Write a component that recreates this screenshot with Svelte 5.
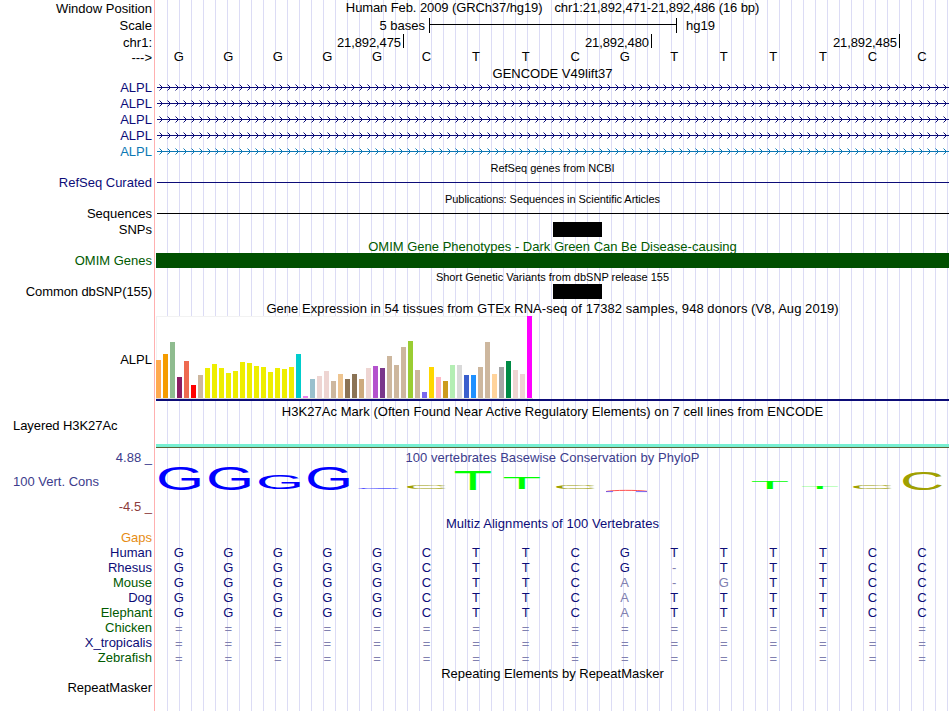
<script lang="ts">
	type Cell = { base: string; faded: boolean };

	const sequence = "GGGGGCTTCGTTTTCC".split("");

	const transcripts = ["navy", "navy", "navy", "navy", "teal"];

	const expression: [string, number][] = [
		["#ffaa4f", 38], ["#f59c00", 44], ["#8fbc8f", 56], ["#8b1c62", 21], ["#ee6a50", 37],
		["#ff0000", 13], ["#cdb79e", 23], ["#eeee00", 30], ["#eeee00", 34], ["#eeee00", 30],
		["#eeee00", 25], ["#eeee00", 27], ["#eeee00", 36], ["#eeee00", 35], ["#eeee00", 32],
		["#eeee00", 31], ["#eeee00", 26], ["#eeee00", 30], ["#eeee00", 29], ["#eeee00", 31],
		["#00cdcd", 44], ["#ee82ee", 2], ["#9ac0cd", 19], ["#eed5d2", 22], ["#eed5d2", 27],
		["#cdb79e", 17], ["#eec591", 24], ["#8b7355", 19], ["#8b7355", 24], ["#cdaa7d", 19],
		["#eed5d2", 30], ["#b452cd", 32], ["#7a378b", 30], ["#cdb79e", 42], ["#cdb79e", 33],
		["#cdb79e", 51], ["#9acd32", 57], ["#cdb79e", 28], ["#7a67ee", 6], ["#ffd700", 31],
		["#ffb6c1", 21], ["#cd9b1d", 17], ["#b4eeb4", 33], ["#d9d9d9", 33], ["#3a5fcd", 23],
		["#1e90ff", 23], ["#cdb79e", 31], ["#cdb79e", 56], ["#ffd39b", 24], ["#a6a6a6", 31],
		["#008b45", 37], ["#eed5d2", 28], ["#eed5d2", 24], ["#ff00ff", 82],
	];

	// base, left, top, width, height within the conservation track
	const logo: [string, number, number, number, number][] = [
		["G", 3, 19, 41, 23],
		["G", 53, 19, 41, 23],
		["G", 103, 27, 41, 14],
		["G", 152, 19, 41, 23],
		["G", 202, 39.4, 41, 1.4],
		["C", 251, 37, 39, 4],
		["T", 299, 23, 36, 19],
		["T", 348, 30, 36, 11],
		["C", 400, 37, 39, 4],
		["T", 596, 34, 36, 7],
		["T", 646, 39, 36, 2],
		["C", 697, 37, 39, 4],
		["C", 747, 24, 39, 18],
	];

	// ink box of each capital at font-size 100: left, width, height, overshoot
	const glyphs: Record<string, [number, number, number, number, string]> = {
		G: [5, 66.2, 71, 1, "#0000ff"],
		C: [5, 63.7, 71, 1, "#a0a000"],
		T: [2.2, 56.7, 68.8, 0, "#00ff00"],
	};

	const species = [
		{ name: "Human", color: "navy", bases: "GGGGGCTTCGTTTTCC" },
		{ name: "Rhesus", color: "navy", bases: "GGGGGCTTCG-TTTCC" },
		{ name: "Mouse", color: "green", bases: "GGGGGCTTCA-GTTCC" },
		{ name: "Dog", color: "navy", bases: "GGGGGCTTCATTTTCC" },
		{ name: "Elephant", color: "green", bases: "GGGGGCTTCATTTTCC" },
		{ name: "Chicken", color: "green", bases: "================" },
		{ name: "X_tropicalis", color: "navy", bases: "================" },
		{ name: "Zebrafish", color: "green", bases: "================" },
	];

	function cells(bases: string): Cell[] {
		return bases.split("").map((base, i) => ({ base, faded: base !== sequence[i] }));
	}

	function place([base, x, y, w, h]: [string, number, number, number, number]) {
		const [left, width, height, over] = glyphs[base];
		const sx = w / width;
		const sy = h / height;
		return `translate(${x - left * sx} ${y + h - over * sy}) scale(${sx} ${sy})`;
	}
</script>

{#snippet title(text: string, kind: string)}
	<div class="row title {kind}">
		<span class="track">{text}</span>
	</div>
{/snippet}

<main class="browser">
	<div class="row position">
		<span class="label">Window Position</span>
		<div class="track">
			<span>Human Feb. 2009 (GRCh37/hg19)</span>
			<span>chr1:21,892,471-21,892,486 (16 bp)</span>
		</div>
	</div>
	<div class="row scale">
		<span class="label">Scale</span>
		<div class="track">
			<span class="size">5 bases</span>
			<i class="ruler"></i>
			<span>hg19</span>
		</div>
	</div>
	<div class="row chrom">
		<span class="label">chr1:</span>
		<div class="track ticks">
			<span>21,892,475</span>
			<span>21,892,480</span>
			<span>21,892,485</span>
		</div>
	</div>
	<div class="row strand">
		<span class="label">---&gt;</span>
		<div class="track bases">
			{#each sequence as base}<span>{base}</span>{/each}
		</div>
	</div>

	{@render title("GENCODE V49lift37", "gencode")}
	{#each transcripts as color}
		<div class="row gene {color}">
			<span class="label">ALPL</span>
			<svg class="track" width="793" height="16" shape-rendering="crispEdges">
				<rect x="1" y="7" width="792" height="1" fill="currentColor" />
				{#each { length: 99 } as _, i}
					<g fill="currentColor" transform="translate({i * 8 + 3} 4)">
						<rect x="2" y="2" width="1" height="3" />
						<rect x="1" y="1" width="1" height="1" />
						<rect x="1" y="5" width="1" height="1" />
						<rect width="1" height="1" opacity="0.5" />
						<rect y="6" width="1" height="1" opacity="0.5" />
					</g>
				{/each}
			</svg>
		</div>
	{/each}

	{@render title("RefSeq genes from NCBI", "small refseq")}
	<div class="row item navy">
		<span class="label">RefSeq Curated</span>
		<div class="track"><i class="line"></i></div>
	</div>

	{@render title("Publications: Sequences in Scientific Articles", "small pubs")}
	<div class="row item sequences">
		<span class="label">Sequences</span>
		<div class="track"><i class="line"></i></div>
	</div>
	<div class="row item">
		<span class="label">SNPs</span>
		<div class="track"><i class="block"></i></div>
	</div>

	{@render title("OMIM Gene Phenotypes - Dark Green Can Be Disease-causing", "omim green")}
	<div class="row item green">
		<span class="label">OMIM Genes</span>
		<div class="track"><i class="bar"></i></div>
	</div>

	{@render title("Short Genetic Variants from dbSNP release 155", "small dbsnp")}
	<div class="row item">
		<span class="label snp">Common dbSNP(155)</span>
		<div class="track"><i class="block"></i></div>
	</div>

	{@render title("Gene Expression in 54 tissues from GTEx RNA-seq of 17382 samples, 948 donors (V8, Aug 2019)", "gtex")}
	<div class="row expression">
		<span class="label">ALPL</span>
		<div class="track">
			<div class="chart">
				{#each expression as [color, height]}
					<i style:background={color} style:height="{height}px"></i>
				{/each}
			</div>
		</div>
	</div>

	{@render title("H3K27Ac Mark (Often Found Near Active Regulatory Elements) on 7 cell lines from ENCODE", "histone")}
	<div class="row layered">
		<span class="label left">Layered H3K27Ac</span>
		<div class="track"><i class="signal"></i></div>
	</div>

	<div class="row conservation">
		<div class="label axis">
			<span class="high">4.88 _</span>
			<span class="name">100 Vert. Cons</span>
			<span class="low">-4.5 _</span>
		</div>
		<div class="track">
			<div class="heading">100 vertebrates Basewise Conservation by PhyloP</div>
			<svg class="logo" width="793" height="50" viewBox="0 18 793 50">
				{#each logo as item}
					<text transform={place(item)} fill={glyphs[item[0]][4]}>{item[0]}</text>
				{/each}
				<!-- negative score at 21,892,480 -->
				<path d="M450 43.5 C457 42 482 42 491 43.3" fill="none" stroke="#ff5050" />
				<path d="M450 43.6h7M480 43.6h11" stroke="#5050ff" stroke-width="0.8" />
			</svg>
		</div>
	</div>

	{@render title("Multiz Alignments of 100 Vertebrates", "multiz navy")}
	<div class="row species gaps"><span class="label">Gaps</span></div>
	{#each species as { name, color, bases }}
		<div class="row species">
			<span class="label {color}">{name}</span>
			<div class="track bases navy" class:unaligned={bases[0] === "="}>
				{#each cells(bases) as { base, faded }}<span class:faded>{base}</span>{/each}
			</div>
		</div>
	{/each}

	{@render title("Repeating Elements by RepeatMasker", "repeats")}
	<div class="row item">
		<span class="label">RepeatMasker</span>
	</div>
</main>

<style>
	:global(body) {
		margin: 0;
		background: #fff;
		overflow: hidden;
	}

	.browser {
		box-sizing: border-box;
		width: 949px;
		height: 711px;
		overflow: hidden;
		font: 13px/15px "Liberation Sans", Arial, sans-serif;
		color: #000;
		background:
			linear-gradient(#ffb0b0, #ffb0b0) 154px 0 / 1px 100% no-repeat,
			repeating-linear-gradient(to right, transparent 0 11px, #dcdcf5 11px 12px) 156px 0 / 793px 100% no-repeat;
	}

	.row {
		display: grid;
		grid-template-columns: 152px 793px;
		column-gap: 4px;
		white-space: nowrap;
	}

	.label {
		text-align: right;
	}

	.label.left {
		text-align: left;
		padding-left: 13px;
		letter-spacing: -0.07px;
	}

	.label.snp {
		letter-spacing: -0.1px;
	}

	.track {
		grid-column: 2;
		display: flex;
	}

	.title .track {
		justify-content: center;
	}

	.small {
		font-size: 11px;
	}

	.navy {
		color: #0c0c78;
	}

	.teal {
		color: #0c78b4;
	}

	.green {
		color: #005a00;
	}

	.position {
		height: 17px;
		padding-top: 1px;
		box-sizing: border-box;
	}

	.position .track {
		justify-content: center;
		gap: 12px;
		margin-top: -1px;
		letter-spacing: -0.1px;
	}

	.scale {
		height: 17px;
		line-height: 17px;
	}

	.scale .size {
		width: 269px;
		text-align: right;
		margin-right: 4px;
	}

	.ruler {
		box-sizing: border-box;
		width: 248px;
		height: 15px;
		margin-top: 1px;
		margin-right: 9px;
		border: solid #000;
		border-width: 0 1px;
		background: linear-gradient(#000, #000) 0 6px / 100% 1px no-repeat;
	}

	.chrom {
		height: 15px;
		line-height: 17px;
	}

	.ticks span {
		box-sizing: border-box;
		width: 248px;
		height: 14px;
		padding-right: 2px;
		border-right: 1px solid #000;
		text-align: right;
		letter-spacing: -0.1px;
	}

	.strand {
		height: 17px;
		line-height: 16px;
	}

	.strand .label {
		line-height: 18px;
	}

	.bases {
		display: grid;
		grid-template-columns: repeat(16, 49.56px);
		margin-left: -2px;
		text-align: center;
	}

	.gencode {
		height: 14px;
	}

	.gene {
		height: 16px;
		line-height: 16px;
	}

	.gene .track {
		display: block;
	}

	.refseq {
		height: 15px;
		line-height: 17px;
	}

	.pubs {
		height: 16px;
		line-height: 19px;
		letter-spacing: -0.06px;
	}

	.item {
		height: 15px;
	}

	.sequences {
		height: 16px;
	}

	.line {
		width: 792px;
		height: 1px;
		margin: 7px 0 0 1px;
		background: currentColor;
	}

	.block {
		width: 49px;
		height: 15px;
		margin-left: 397px;
		background: #000;
	}

	.bar {
		width: 100%;
		height: 15px;
		background: #005000;
	}

	.omim {
		height: 16px;
		line-height: 19px;
	}

	.dbsnp {
		height: 16px;
		line-height: 19px;
	}

	.gtex {
		height: 17px;
		line-height: 19px;
		letter-spacing: 0.055px;
	}

	.expression {
		height: 85px;
		line-height: 87px;
	}

	.expression .track {
		height: 83px;
		border-bottom: 2px solid #0c0c78;
	}

	.chart {
		box-sizing: border-box;
		display: flex;
		align-items: flex-end;
		gap: 2px;
		width: 377px;
		height: 83px;
		border-bottom: 1px solid #d8d8d8;
		background: #fff;
		box-shadow: inset 1px 1px #f2f2f2;
	}

	.chart i {
		width: 5px;
	}

	.histone {
		height: 17px;
		line-height: 21px;
		letter-spacing: 0.045px;
	}

	.layered {
		height: 30px;
	}

	.signal {
		width: 100%;
		height: 3px;
		margin-top: 26px;
		background: #78f0d2;
		border-bottom: 1px solid #5a6437;
	}

	.conservation {
		height: 68px;
		color: #3c3c8c;
	}

	.conservation .track {
		display: block;
	}

	.axis {
		display: flex;
		flex-direction: column;
		line-height: 25px;
		margin-top: -4px;
	}

	.axis .high {
		height: 25px;
		line-height: 27px;
	}

	.axis .name {
		text-align: left;
		padding-left: 13px;
	}

	.axis .low {
		color: #8c3c3c;
	}

	.heading {
		height: 18px;
		line-height: 19px;
		text-align: center;
		letter-spacing: 0.04px;
	}

	.logo {
		display: block;
		overflow: visible;
		font-size: 100px;
	}

	.multiz {
		height: 14px;
		letter-spacing: 0.06px;
	}

	.species {
		height: 15px;
	}

	.gaps {
		color: #e68c14;
	}

	.unaligned {
		line-height: 17px;
	}

	.faded {
		color: #8080b0;
	}

	.repeats {
		height: 15px;
		line-height: 17px;
	}
</style>
